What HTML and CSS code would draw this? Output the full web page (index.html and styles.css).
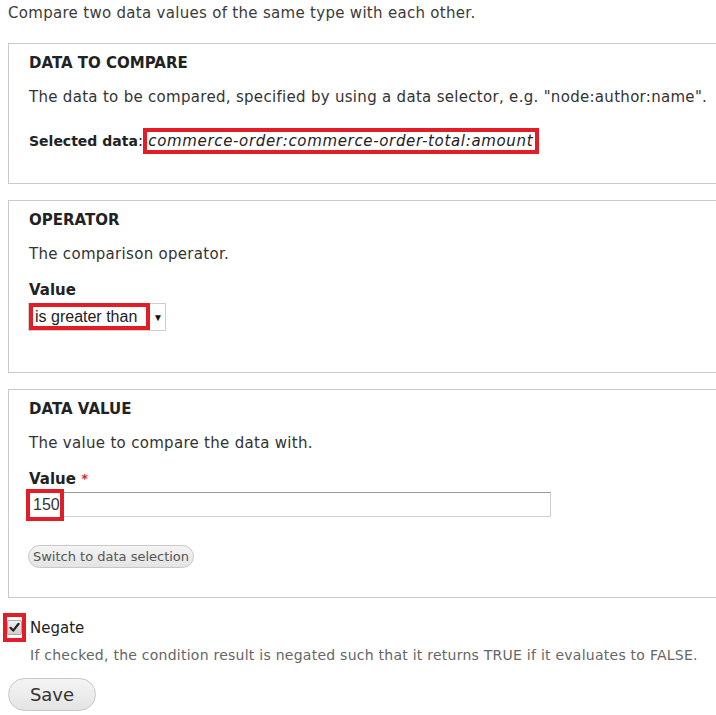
FILE: index.html
```html
<!DOCTYPE html>
<html>
<head>
<meta charset="utf-8">
<link rel="stylesheet" href="styles.css">
</head>
<body>
<p class="intro">Compare two data values of the same type with each other.</p>

<div class="fieldset fs-compare">
  <h2 class="fs-title">DATA TO COMPARE</h2>
  <p class="fs-desc">The data to be compared, specified by using a data selector, e.g. "node:author:name".</p>
  <p class="selected"><b>Selected data</b>:<span class="hl hl-inline"><i>commerce-order:commerce-order-total:amount</i></span></p>
</div>

<div class="fieldset fs-operator">
  <h2 class="fs-title">OPERATOR</h2>
  <p class="fs-desc">The comparison operator.</p>
  <div class="label">Value</div>
  <div class="select">
    <span class="hl hl-select">is greater than</span>
    <span class="arrow">&#9660;</span>
  </div>
</div>

<div class="fieldset fs-value">
  <h2 class="fs-title">DATA VALUE</h2>
  <p class="fs-desc">The value to compare the data with.</p>
  <div class="label">Value <span class="req">*</span></div>
  <div class="text-input"><span class="hl hl-input">150</span></div>
  <div class="btn-row"><span class="btn btn-small">Switch to data selection</span></div>
</div>

<div class="checkbox-row">
  <span class="hl hl-check"><span class="check">
    <svg width="11" height="11" viewBox="0 0 11 11"><path d="M1.5 5.8 L4.2 8.6 L9.6 1.8" fill="none" stroke="#222" stroke-width="2.2" stroke-linecap="round" stroke-linejoin="round"/></svg>
  </span></span>
  <span class="check-label">Negate</span>
</div>
<p class="check-desc">If checked, the condition result is negated such that it returns TRUE if it evaluates to FALSE.</p>

<div class="actions"><span class="btn btn-save">Save</span></div>
</body>
</html>
```

FILE: styles.css
```css
html, body {
  margin: 0;
  padding: 0;
  background: #fff;
}
body {
  padding-left: 8px;
  font-family: "DejaVu Sans", Verdana, sans-serif;
  font-size: 15px;
  letter-spacing: 0.3px;
  color: #333;
  overflow: hidden;
  width: 708px;
}
.intro {
  margin: 0;
  padding-top: 3px;
  line-height: 20px;
  height: 40px;
  color: #3b3b3b;
}
.fieldset {
  border: 1px solid #cacaca;
  border-right: none;
  width: 720px;
  padding: 10px 0 0 20px;
  box-sizing: border-box;
  margin-bottom: 16px;
}
.fs-title {
  margin: 0;
  font-size: 15px;
  font-weight: bold;
  letter-spacing: 0;
  line-height: 18px;
  color: #222;
}
.fs-desc {
  margin: 15px 0 0;
  line-height: 20px;
  white-space: nowrap;
}
.fs-compare {
  height: 141px;
}
.fs-operator {
  height: 173px;
}
.fs-value {
  height: 209px;
  margin-bottom: 0;
}
.selected {
  margin: 21px 0 0;
  line-height: 20px;
  color: #222;
  white-space: nowrap;
}
.selected b {
  font-weight: bold;
  font-size: 14px;
  letter-spacing: 0;
}
.hl {
  border: 4px solid #e31d25;
  box-sizing: border-box;
}
.hl-inline {
  display: inline-block;
  padding: 0 2px 0 1px;
  line-height: 18px;
  margin-left: 0;
}
.hl-inline i {
  font-style: italic;
  letter-spacing: 0.66px;
}
.label {
  margin-top: 16px;
  line-height: 20px;
  font-weight: bold;
  font-size: 15px;
  letter-spacing: 0;
  color: #222;
}
.req {
  color: #e0262b;
  font-size: 13px;
  vertical-align: top;
}
.select {
  margin-top: 3px;
  margin-left: -1px;
  width: 138px;
  height: 28px;
  border: 1px solid #cfcfcf;
  box-sizing: border-box;
  display: flex;
  align-items: center;
  font-family: "Liberation Sans", Arial, sans-serif;
  font-size: 16px;
  letter-spacing: 0;
  color: #222;
}
.hl-select {
  display: flex;
  align-items: center;
  height: 27px;
  width: 121px;
  margin-top: -1px;
  padding-left: 2px;
  line-height: 18px;
}
.arrow {
  font-size: 10px;
  margin-left: 3px;
  color: #111;
}
.text-input {
  margin-top: 3px;
  margin-left: -1px;
  width: 523px;
  height: 25px;
  border: 1px solid #d0d0d0;
  border-top-color: #9b9b9b;
  box-sizing: border-box;
  font-family: "Liberation Sans", Arial, sans-serif;
  font-size: 16px;
  letter-spacing: 0;
  color: #333;
}
.hl-input {
  display: inline-flex;
  align-items: center;
  width: 38px;
  height: 32px;
  margin: -4px 0 0 -3px;
  padding-left: 3px;
  background: #fff;
}
.btn-row {
  margin-top: 28px;
}
.btn {
  display: inline-block;
  box-sizing: border-box;
  border: 1px solid #c8c8c8;
  background: linear-gradient(#f4f4f4, #e4e4e4);
  color: #555;
  text-align: center;
  letter-spacing: 0;
}
.btn-small {
  margin-left: -1px;
  width: 166px;
  height: 23px;
  line-height: 21px;
  border-radius: 12px;
  font-size: 13px;
}
.checkbox-row {
  margin-top: 15px;
  margin-left: -5px;
  display: flex;
  align-items: center;
  height: 29px;
}
.hl-check {
  width: 23px;
  height: 29px;
  display: flex;
  align-items: center;
  justify-content: center;
}
.check {
  width: 13px;
  height: 13px;
  border: 1px solid #a8a8a8;
  border-radius: 2px;
  background: linear-gradient(#f3f3f3, #cfcfcf);
  display: flex;
  align-items: center;
  justify-content: center;
}
.check-label {
  margin-left: 4px;
  font-size: 15px;
  letter-spacing: 0;
  color: #222;
}
.check-desc {
  margin: 3px 0 0 22px;
  line-height: 20px;
  font-size: 14px;
  letter-spacing: 0.25px;
  color: #666;
  white-space: nowrap;
}
.actions {
  margin-top: 13px;
}
.btn-save {
  width: 88px;
  height: 33px;
  line-height: 31px;
  border-radius: 17px;
  font-size: 18px;
  color: #333;
}
```
